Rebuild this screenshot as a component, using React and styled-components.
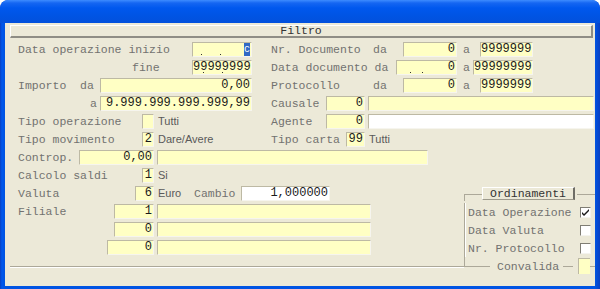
import React from 'react';
import styled, { createGlobalStyle } from 'styled-components';

const Global = createGlobalStyle`
    html, body { margin: 0; padding: 0; background: #ffffff; }
    body { width: 600px; height: 289px; overflow: hidden; }
`;

const mono = `"Liberation Mono", "DejaVu Sans Mono", monospace`;

const Window = styled.div`
    width: 600px;
    height: 289px;
    box-sizing: border-box;
    display: flex;
    flex-direction: column;
    background: linear-gradient(to right, #0a3fc0 0, #0058ee 2px, #0054e3 4px, #0054e3 595px, #0a3fc0 600px);
    border-radius: 8px 8px 0 0;
    padding: 0 5px 3px 5px;
    overflow: hidden;
`;

const TitleBar = styled.div`
    height: 23px;
    margin: 0 -5px;
    flex-shrink: 0;
    border-radius: 8px 8px 0 0;
    background: linear-gradient(to bottom, #3d8cff 0, #1566f2 3px, #0058ee 8px, #0054e3 16px, #0350dc 23px);
`;

const Body = styled.div`
    flex: 1;
    background: #ece9d8;
    display: flex;
    flex-direction: column;
`;

const FilterBar = styled.div`
    height: 13px;
    margin: 2px 2px 0 5px;
    box-sizing: border-box;
    border-top: 1px solid #ffffff;
    border-left: 1px solid #ffffff;
    border-right: 2px solid #8f8d85;
    border-bottom: 2px solid #8f8d85;
    font-family: ${mono};
    font-size: 11.5px;
    line-height: 10px;
    color: #333;
    text-align: center;
`;

const Rows = styled.div`
    margin-top: 4px;
    display: flex;
    flex-direction: column;
    padding-left: 13px;
`;

const Row = styled.div`
    display: flex;
    align-items: flex-start;
    height: 18px;
`;

const Left = styled.div`
    display: flex;
    align-items: flex-start;
    width: 253px;
    flex-shrink: 0;
`;

const Right = styled.div`
    display: flex;
    align-items: flex-start;
`;

const Label = styled.span`
    display: block;
    box-sizing: border-box;
    width: ${p => p.$w}px;
    padding-left: ${p => p.$pl || 0}px;
    flex-shrink: 0;
    font-family: ${mono};
    font-size: 11.5px;
    line-height: 15px;
    color: #727270;
    white-space: pre;
`;

const Caption = styled.span`
    display: block;
    box-sizing: border-box;
    width: ${p => (p.$w ? `${p.$w}px` : 'auto')};
    flex-shrink: 0;
    padding-left: 4px;
    font-family: "Liberation Sans", Arial, sans-serif;
    font-size: 11px;
    line-height: 14px;
    color: #5a5a5a;
`;

const Field = styled.div`
    position: relative;
    width: ${p => p.$w}px;
    height: 15px;
    box-sizing: border-box;
    flex-shrink: 0;
    margin-left: ${p => p.$ml || 0}px;
    background: ${p => (p.$white ? '#ffffff' : '#ffffc4')};
    border-top: 1px solid #bdb9a4;
    border-left: 1px solid #bdb9a4;
    border-right: 1px solid #f6f5ee;
    border-bottom: 1px solid #f6f5ee;
    padding-right: 1px;
    font-family: ${mono};
    font-size: 12px;
    line-height: 13px;
    color: #1a1a1a;
    text-align: right;
    white-space: nowrap;
    overflow: hidden;
`;

const Dot = styled.i`
    position: absolute;
    bottom: 1px;
    width: 1px;
    height: 1px;
    background: #333;
`;

const Caret = styled.span`
    position: absolute;
    right: 1px;
    top: 0;
    width: 6px;
    height: 13px;
    background: #316ac5;
    color: #ffffff;
    font-size: 10px;
    line-height: 13px;
    text-align: center;
`;

const Lower = styled.div`
    display: flex;
    align-items: flex-start;
    margin-left: 5px;
`;

const LowerLeft = styled.div`
    width: 454px;
    box-sizing: border-box;
    padding: 0 0 8px 8px;
    border-bottom: 1px solid #aca899;
    box-shadow: 0 1px 0 #ffffff;
    display: flex;
    flex-direction: column;
`;

const Group = styled.div`
    width: 131px;
    margin-top: 1px;
    display: flex;
    flex-direction: column;
`;

const GroupHead = styled.div`
    display: flex;
    height: 14px;
`;

const Seg = styled.div`
    align-self: ${p => (p.$top ? 'flex-start' : 'flex-end')};
    width: ${p => (p.$w ? `${p.$w}px` : 'auto')};
    flex: ${p => (p.$w ? '0 0 auto' : '1')};
    height: ${p => p.$h}px;
    margin-left: ${p => p.$ml || 0}px;
    box-sizing: border-box;
    border-top: ${p => (p.$bt ? '1px solid #aca899' : 'none')};
    border-bottom: ${p => (p.$bb ? '1px solid #aca899' : 'none')};
    border-left: ${p => (p.$bl ? '1px solid #aca899' : 'none')};
`;

const OrdButton = styled.div`
    width: 93px;
    height: 13px;
    box-sizing: border-box;
    border-top: 1px solid #ffffff;
    border-left: 1px solid #ffffff;
    border-right: 2px solid #6f6d66;
    border-bottom: 1px solid #9d9a8c;
    font-family: ${mono};
    font-size: 11.5px;
    line-height: 11px;
    color: #333;
    text-align: center;
`;

const GroupBody = styled.div`
    margin-top: 2px;
    border-left: 1px solid #aca899;
    box-shadow: inset 1px 0 0 #ffffff;
    padding-left: 3px;
    display: flex;
    flex-direction: column;
`;

const CheckRow = styled.label`
    display: flex;
    align-items: center;
    height: 18px;
`;

const Box = styled.span`
    width: 11px;
    height: 11px;
    margin-right: 4px;
    box-sizing: border-box;
    background: #ffffff;
    border-top: 1px solid #7f7d74;
    border-left: 1px solid #7f7d74;
    border-right: 1px solid #f4f3ee;
    border-bottom: 1px solid #f4f3ee;
    display: flex;
    align-items: center;
    justify-content: center;
`;

const BottomRow = styled.div`
    display: flex;
    height: 18px;
    align-items: center;
`;

const Convalida = styled.span`
    margin-left: 7px;
    font-family: ${mono};
    font-size: 11.5px;
    color: #727270;
    line-height: 15px;
`;

const SmallBox = styled.div`
    width: 12px;
    height: 16px;
    margin-left: 5px;
    box-sizing: border-box;
    background: #ffffc4;
    border-top: 1px solid #bdb9a4;
    border-left: 1px solid #bdb9a4;
`;

function Check({ label, checked }) {
    return (
        <CheckRow>
            <Label $w={112} style={{ flex: 1 }}>{label}</Label>
            <Box>
                {checked && (
                    <svg width="7" height="7" viewBox="0 0 7 7">
                        <path d="M0 3 L2 5 L7 0 L7 2 L2 7 L0 5 Z" fill="#1a1a1a" />
                    </svg>
                )}
            </Box>
        </CheckRow>
    );
}

export default function App() {
    return (
        <>
            <Global />
            <Window>
                <TitleBar />
                <Body>
                    <FilterBar>Filtro</FilterBar>
                    <Rows>
                        <Row>
                            <Left>
                                <Label $w={174}>Data operazione inizio</Label>
                                <Field $w={60}>
                                    <Dot style={{ left: 8 }} />
                                    <Dot style={{ left: 27 }} />
                                    <Caret>c</Caret>
                                </Field>
                            </Left>
                            <Right>
                                <Label $w={102}>Nr. Documento</Label>
                                <Label $w={30}>da</Label>
                                <Field $w={54}>0</Field>
                                <Label $w={23} $pl={6}>a</Label>
                                <Field $w={53}>9999999</Field>
                            </Right>
                        </Row>
                        <Row>
                            <Left>
                                <Label $w={174} $pl={114}>fine</Label>
                                <Field $w={60}>
                                    99999999
                                    <Dot style={{ left: 10 }} />
                                    <Dot style={{ left: 29 }} />
                                </Field>
                            </Left>
                            <Right>
                                <Label $w={125}>Data documento da</Label>
                                <Field $w={61}>
                                    <Dot style={{ left: 13 }} />
                                    <Dot style={{ left: 25 }} />
                                    0
                                </Field>
                                <Label $w={16} $pl={6}>a</Label>
                                <Field $w={60}>99999999</Field>
                            </Right>
                        </Row>
                        <Row>
                            <Left>
                                <Label $w={82}>Importo  da</Label>
                                <Field $w={152}>0,00</Field>
                            </Left>
                            <Right>
                                <Label $w={102}>Protocollo</Label>
                                <Label $w={30}>da</Label>
                                <Field $w={54}>0</Field>
                                <Label $w={23} $pl={6}>a</Label>
                                <Field $w={53}>9999999</Field>
                            </Right>
                        </Row>
                        <Row>
                            <Left>
                                <Label $w={82} $pl={72}>a</Label>
                                <Field $w={152}>9.999.999.999.999,99</Field>
                            </Left>
                            <Right>
                                <Label $w={55}>Causale</Label>
                                <Field $w={39}>0</Field>
                                <Field $w={226} $ml={3} />
                            </Right>
                        </Row>
                        <Row>
                            <Left>
                                <Label $w={124}>Tipo operazione</Label>
                                <Field $w={12} />
                                <Caption>Tutti</Caption>
                            </Left>
                            <Right>
                                <Label $w={55}>Agente</Label>
                                <Field $w={39}>0</Field>
                                <Field $w={226} $ml={3} $white />
                            </Right>
                        </Row>
                        <Row>
                            <Left>
                                <Label $w={124}>Tipo movimento</Label>
                                <Field $w={12}>2</Field>
                                <Caption>Dare/Avere</Caption>
                            </Left>
                            <Right>
                                <Label $w={75}>Tipo carta</Label>
                                <Field $w={19}>99</Field>
                                <Caption>Tutti</Caption>
                            </Right>
                        </Row>
                        <Row>
                            <Label $w={61}>Controp.</Label>
                            <Field $w={75}>0,00</Field>
                            <Field $w={271} $ml={3} />
                        </Row>
                        <Row>
                            <Label $w={124}>Calcolo saldi</Label>
                            <Field $w={12}>1</Field>
                            <Caption>Si</Caption>
                        </Row>
                    </Rows>
                    <Lower>
                        <LowerLeft>
                            <Row>
                                <Label $w={117}>Valuta</Label>
                                <Field $w={19}>6</Field>
                                <Caption $w={40}>Euro</Caption>
                                <Label $w={47}>Cambio</Label>
                                <Field $w={89} $white>1,000000</Field>
                            </Row>
                            <Row>
                                <Label $w={96}>Filiale</Label>
                                <Field $w={40}>1</Field>
                                <Field $w={214} $ml={3} />
                            </Row>
                            <Row>
                                <Label $w={96} />
                                <Field $w={40}>0</Field>
                                <Field $w={214} $ml={3} />
                            </Row>
                            <Row>
                                <Label $w={89} />
                                <Field $w={47}>0</Field>
                                <Field $w={214} $ml={3} />
                            </Row>
                        </LowerLeft>
                        <Group>
                            <GroupHead>
                                <Seg $w={18} $h={7} $bt $bl />
                                <OrdButton>Ordinamenti</OrdButton>
                                <Seg $h={7} $bt $ml={2} />
                            </GroupHead>
                            <GroupBody>
                                <Check label="Data Operazione" checked />
                                <Check label="Data Valuta" />
                                <Check label="Nr. Protocollo" />
                            </GroupBody>
                            <BottomRow>
                                <Seg $w={26} $h={10} $top $bl $bb />
                                <Convalida>Convalida</Convalida>
                                <Seg $w={10} $h={10} $top $bb $ml={4} />
                                <SmallBox />
                                <Seg $h={10} $top $bb />
                            </BottomRow>
                        </Group>
                    </Lower>
                </Body>
            </Window>
        </>
    );
}
